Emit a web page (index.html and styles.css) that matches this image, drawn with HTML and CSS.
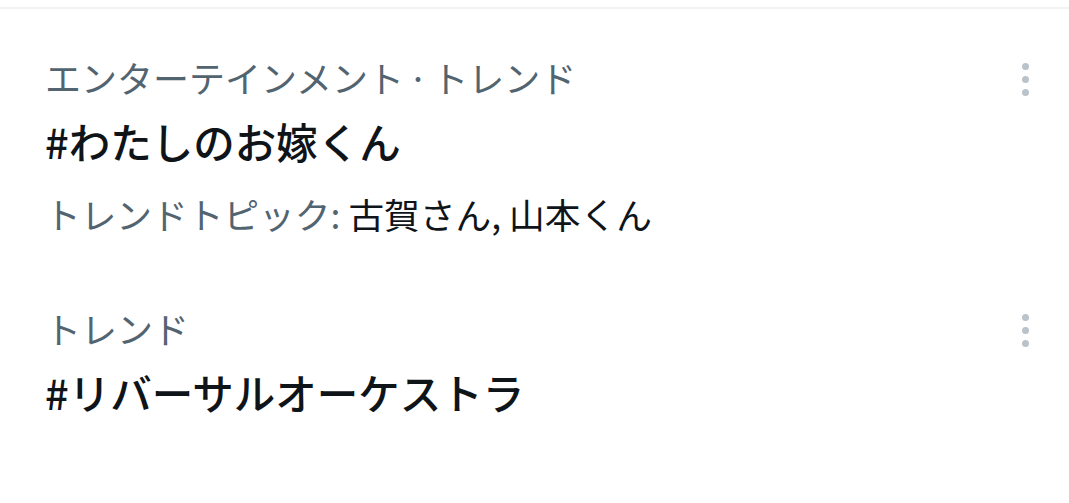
FILE: index.html
```html
<!DOCTYPE html>
<html lang="ja">
<head>
    <meta charset="UTF-8">
    <meta name="viewport" content="width=device-width, initial-scale=1.0">
    <title>トレンド</title>
    <link rel="stylesheet" href="styles.css">
</head>
<body>
    <div class="trends">
        <div class="trend">
            <div class="trend-body">
                <div class="trend-meta">エンターテインメント<span class="dot">·</span>トレンド</div>
                <div class="trend-name">#わたしのお嫁くん</div>
                <div class="trend-topics"><span class="label">トレンドトピック:</span> 古賀さん, 山本くん</div>
            </div>
            <div class="more"><span></span><span></span><span></span></div>
        </div>
        <div class="trend">
            <div class="trend-body">
                <div class="trend-meta">トレンド</div>
                <div class="trend-name">#リバーサルオーケストラ</div>
            </div>
            <div class="more"><span></span><span></span><span></span></div>
        </div>
    </div>
</body>
</html>
```
FILE: styles.css
```css
body {
    margin: 0;
    background-color: #fff;
    font-family: "Noto Sans CJK JP", "Noto Sans", sans-serif;
    color: #0f1419;
}
.trends {
    margin-top: 7px;
    border-top: 2px solid #eff3f4;
}
.trend {
    display: flex;
    justify-content: space-between;
    padding: 46px 40px 30px 45px;
}
.trend + .trend {
    padding-top: 40px;
}
.trend-meta {
    font-size: 36px;
    line-height: 44px;
    color: #536471;
}
.trend-meta .dot {
    margin: 0 4px;
}
.trend-name {
    font-size: 41.5px;
    line-height: 50px;
    font-weight: 500;
    margin-top: 17px;
}
.trend-topics {
    font-size: 35.7px;
    line-height: 44px;
    margin-top: 26px;
}
.trend-topics .label {
    color: #536471;
}
.more {
    display: flex;
    flex-direction: column;
    gap: 6px;
    padding-top: 8px;
}
.more span {
    width: 7px;
    height: 7px;
    border-radius: 50%;
    background-color: #b9c3cb;
}
```
